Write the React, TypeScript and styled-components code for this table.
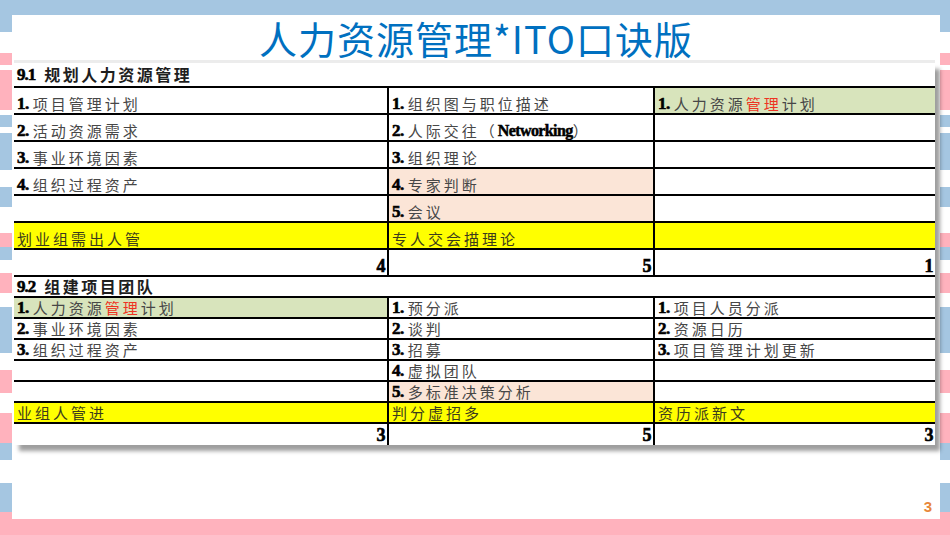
import React from 'react';
import styled, { createGlobalStyle } from 'styled-components';

const GlobalStyle = createGlobalStyle`
  html, body {
    margin: 0;
    padding: 0;
  }
  body {
    font-family: 'Noto Sans CJK SC', sans-serif;
  }
`;

const BLUE = '#a5c6e1';
const PINK = '#ffb2bd';
const WHITE = '#ffffff';

// horizontal bands of the slide background: [colour, from, to]
const bands: [string, number, number][] = [
  [BLUE, 0, 32], [WHITE, 32, 53], [PINK, 53, 65], [WHITE, 65, 70],
  [PINK, 70, 110], [WHITE, 110, 115], [BLUE, 115, 127], [WHITE, 127, 133],
  [BLUE, 133, 170], [WHITE, 170, 187], [BLUE, 187, 207], [WHITE, 207, 233],
  [PINK, 233, 247], [BLUE, 247, 260], [WHITE, 260, 273], [PINK, 273, 293],
  [WHITE, 293, 307], [BLUE, 307, 353], [WHITE, 353, 370], [PINK, 370, 393],
  [WHITE, 393, 413], [PINK, 413, 443], [BLUE, 443, 460], [WHITE, 460, 483],
  [BLUE, 483, 512], [PINK, 512, 535],
];
const stripes = `linear-gradient(to bottom, ${bands
  .map(([c, a, b]) => `${c} ${a}px, ${c} ${b}px`)
  .join(', ')})`;

const Page = styled.div`
  width: 950px;
  height: 535px;
  box-sizing: border-box;
  padding: 15px 10px 16px 12px;
  background: ${stripes};
  display: flex;
`;

const Card = styled.div`
  flex: 1;
  background: #fff;
  display: flex;
  flex-direction: column;
`;

const Title = styled.h1`
  margin: 0;
  height: 45px;
  padding-top: 1px;
  box-sizing: border-box;
  line-height: 44px;
  text-align: center;
  font-size: 38px;
  font-weight: 400;
  letter-spacing: 1px;
  color: #0070c0;
`;

const Divider = styled.div`
  height: 3px;
  margin-left: 2px;
  width: 921px;
  background: #ececec;
`;

const Sheet = styled.div`
  margin-left: 2px;
  width: 921px;
  background: #fff;
  box-shadow: 5px 6px 4px rgba(0, 0, 0, 0.38);
`;

const SectionTitle = styled.div<{ $h: number }>`
  height: ${(p) => p.$h}px;
  box-sizing: border-box;
  border-bottom: 2px solid #000;
  display: flex;
  align-items: center;
  padding: 0 0 0 3px;
  font-size: 16px;
  line-height: 19px;
  font-weight: 700;
  letter-spacing: 2.5px;
  color: #1e1e1e;
`;

const Row = styled.div<{ $h: number; $last?: boolean }>`
  display: grid;
  grid-template-columns: 375px 266px 280px;
  height: ${(p) => p.$h}px;
  box-sizing: border-box;
  border-bottom: ${(p) => (p.$last ? 'none' : '2px solid #000')};
`;

type Tone = 'green' | 'peach' | 'yellow';
const toneBg: Record<Tone, string> = {
  green: '#d8e4bc',
  peach: '#fbe5d7',
  yellow: '#ffff00',
};

const Cell = styled.div<{ $tone?: Tone; $right?: boolean; $low?: boolean }>`
  display: flex;
  align-items: ${(p) => (p.$low ? 'flex-end' : 'center')};
  justify-content: ${(p) => (p.$right ? 'flex-end' : 'flex-start')};
  padding: 0 2px 0 3px;
  white-space: nowrap;
  background: ${(p) => (p.$tone ? toneBg[p.$tone] : '#fff')};
  border-right: 2px solid #000;
  font-size: 15px;
  line-height: 18px;
  letter-spacing: 3px;
  color: ${(p) => (p.$tone === 'yellow' ? '#3c3c1c' : '#474747')};

  &:last-child {
    border-right: none;
  }
`;

const Num = styled.span`
  font-family: 'Liberation Serif', serif;
  font-weight: 700;
  font-size: 17px;
  letter-spacing: -0.5px;
  color: #000;
  -webkit-text-stroke: 0.6px #000;
  margin-right: 4px;
`;

const Total = styled(Num)`
  margin-right: 0;
  font-size: 18px;
`;

const SecNo = styled(Num)`
  margin-right: 9px;
  letter-spacing: -1px;
`;

const Latin = styled.span`
  font-family: 'Liberation Serif', serif;
  font-weight: 700;
  font-size: 16px;
  letter-spacing: -0.6px;
  color: #000;
  -webkit-text-stroke: 0.5px #000;
`;

const Red = styled.span`
  color: #ee3322;
`;

const PageNo = styled.div`
  margin-top: auto;
  align-self: flex-end;
  margin-right: 8px;
  margin-bottom: 4px;
  font-family: 'Liberation Sans', sans-serif;
  font-size: 15px;
  font-weight: 700;
  color: #e8873a;
`;

type Item = { n?: number; t?: React.ReactNode; tone?: Tone };

type Section = {
  no: string;
  name: string;
  headH: number;
  rowH: number;
  low: boolean;
  items: Item[][];
  keys: string[];
  totals: number[];
  last?: boolean;
};

const plan = (
  <>
    人力资源<Red>管理</Red>计划
  </>
);

const sections: Section[] = [
  {
    no: '9.1',
    name: '规划人力资源管理',
    headH: 25,
    rowH: 27,
    low: true,
    items: [
      [{ n: 1, t: '项目管理计划' }, { n: 1, t: '组织图与职位描述' }, { n: 1, t: plan, tone: 'green' }],
      [{ n: 2, t: '活动资源需求' }, { n: 2, t: <>人际交往（<Latin>Networking</Latin>）</> }, {}],
      [{ n: 3, t: '事业环境因素' }, { n: 3, t: '组织理论' }, {}],
      [{ n: 4, t: '组织过程资产' }, { n: 4, t: '专家判断', tone: 'peach' }, {}],
      [{}, { n: 5, t: '会议', tone: 'peach' }, {}],
    ],
    keys: ['划业组需出人管', '专人交会描理论', ''],
    totals: [4, 5, 1],
  },
  {
    no: '9.2',
    name: '组建项目团队',
    headH: 21,
    rowH: 21,
    low: false,
    items: [
      [{ n: 1, t: plan, tone: 'green' }, { n: 1, t: '预分派' }, { n: 1, t: '项目人员分派' }],
      [{ n: 2, t: '事业环境因素' }, { n: 2, t: '谈判' }, { n: 2, t: '资源日历' }],
      [{ n: 3, t: '组织过程资产' }, { n: 3, t: '招募' }, { n: 3, t: '项目管理计划更新' }],
      [{}, { n: 4, t: '虚拟团队' }, {}],
      [{}, { n: 5, t: '多标准决策分析', tone: 'peach' }, {}],
    ],
    keys: ['业组人管进', '判分虚招多', '资历派新文'],
    totals: [3, 5, 3],
    last: true,
  },
];

const SectionBlock = ({ s }: { s: Section }) => (
  <>
    <SectionTitle $h={s.headH}>
      <SecNo>{s.no}</SecNo>
      {s.name}
    </SectionTitle>
    {s.items.map((row, i) => (
      <Row key={i} $h={s.rowH}>
        {row.map((c, j) => (
          <Cell key={j} $tone={c.tone} $low={s.low}>
            {c.n ? <Num>{c.n}.</Num> : null}
            {c.t}
          </Cell>
        ))}
      </Row>
    ))}
    <Row $h={s.rowH}>
      {s.keys.map((k, j) => (
        <Cell key={j} $tone="yellow" $low={s.low}>
          {k}
        </Cell>
      ))}
    </Row>
    <Row $h={s.rowH} $last={s.last}>
      {s.totals.map((n, j) => (
        <Cell key={j} $right $low={s.low}>
          <Total>{n}</Total>
        </Cell>
      ))}
    </Row>
  </>
);

const App = () => (
  <>
    <GlobalStyle />
    <Page>
      <Card>
        <Title>人力资源管理*ITO口诀版</Title>
        <Divider />
        <Sheet>
          {sections.map((s) => (
            <SectionBlock key={s.no} s={s} />
          ))}
        </Sheet>
        <PageNo>3</PageNo>
      </Card>
    </Page>
  </>
);

export default App;
